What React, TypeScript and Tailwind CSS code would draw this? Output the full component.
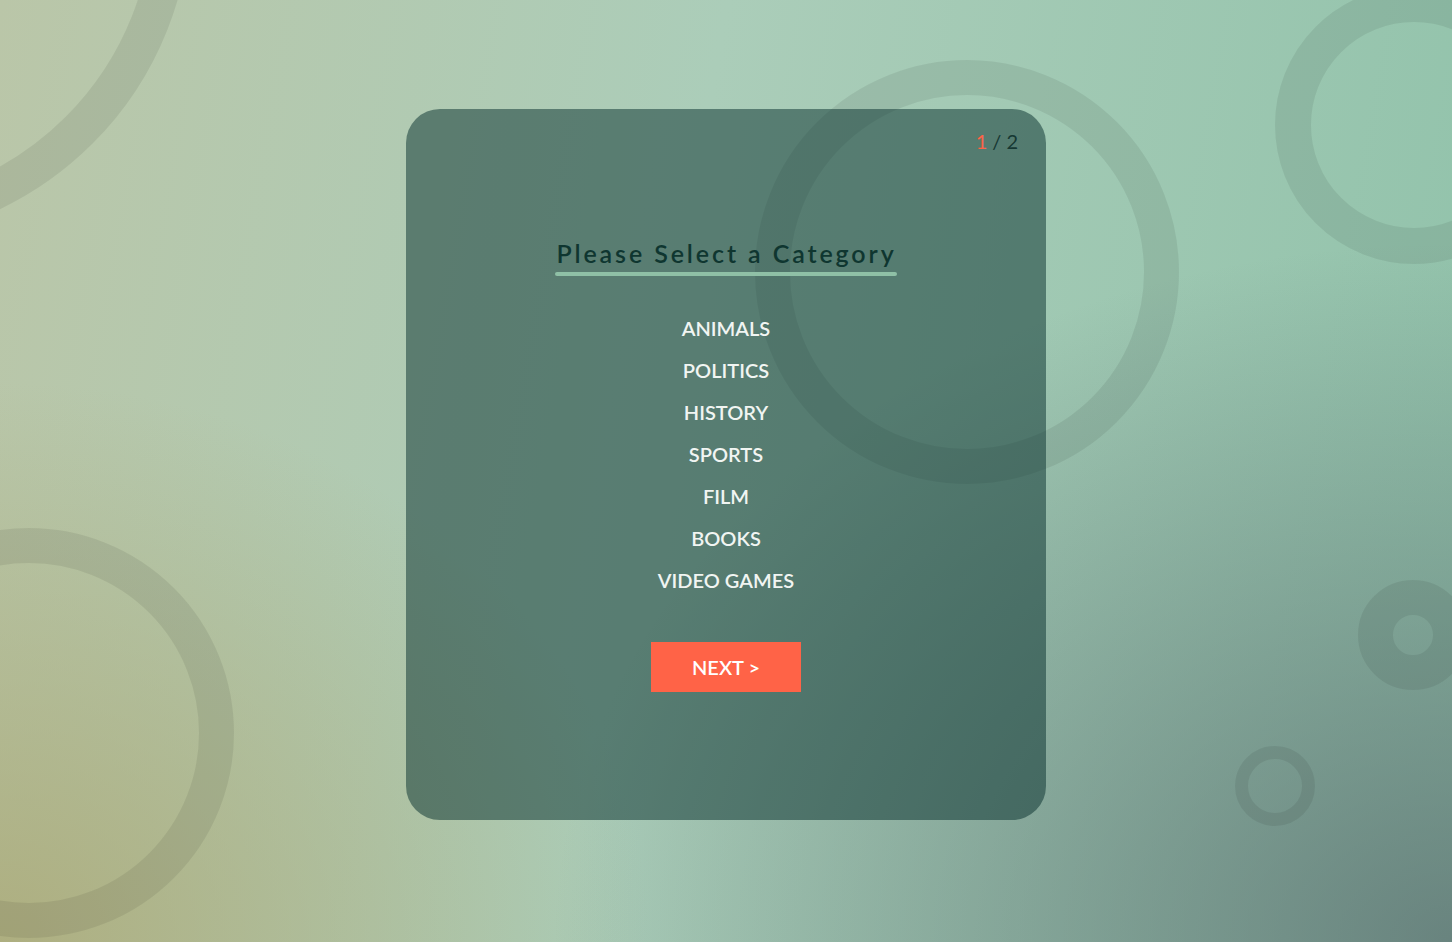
import React from 'react'

const categories = ['ANIMALS', 'POLITICS', 'HISTORY', 'SPORTS', 'FILM', 'BOOKS', 'VIDEO GAMES']

const font = { fontFamily: 'Lato, "Noto Sans", "Liberation Sans", sans-serif' }

function Rings() {
  return (
    <div className="pointer-events-none absolute inset-0 overflow-hidden">
      <div className="absolute left-[-481px] top-[-430px] h-[672px] w-[672px] rounded-full border-[38px] border-black/[0.075]" />
      <div className="absolute left-[755px] top-[60px] h-[424px] w-[424px] rounded-full border-[35px] border-black/[0.075]" />
      <div className="absolute left-[1275px] top-[-14px] h-[278px] w-[278px] rounded-full border-[36px] border-black/[0.075]" />
      <div className="absolute left-[1358px] top-[580px] h-[110px] w-[110px] rounded-full border-[35px] border-black/[0.075]" />
      <div className="absolute left-[1235px] top-[746px] h-[80px] w-[80px] rounded-full border-[13px] border-black/[0.075]" />
      <div className="absolute left-[-176px] top-[528px] h-[410px] w-[410px] rounded-full border-[35px] border-black/[0.075]" />
    </div>
  )
}

export default function App() {
  return (
    <div
      className="relative min-h-screen overflow-hidden bg-[radial-gradient(900px_700px_at_100%_100%,rgba(88,105,108,0.7)_0%,rgba(88,105,108,0)_100%),radial-gradient(650px_560px_at_0%_100%,rgba(172,170,120,0.85)_0%,rgba(172,170,120,0)_100%),linear-gradient(100deg,#bac6a8_0%,#abcdb9_45%,#90c2aa_100%)]"
      style={font}
    >
      <Rings />
      <div className="relative z-10 flex justify-center pt-[109px]">
        <div className="flex h-[711px] w-[640px] flex-col items-center rounded-[34px] bg-[#062d2b]/50">
          <div className="flex w-full justify-end pr-[28px] pt-[18px] text-[20px] leading-[28px] text-[#163833]">
            <span className="text-[#ff6347]">1</span>
            <span className="ml-[5px]">/ 2</span>
          </div>
          <div className="mt-[82px] inline-flex flex-col items-stretch">
            <h1 className="pl-[1px] text-[25px] font-semibold leading-[32px] tracking-[2.9px] text-[#0f3630]">
              Please Select a Category
            </h1>
            <div className="mt-[3px] h-[4px] rounded-full bg-[#8fc0a6]" />
          </div>
          <ul className="mt-[31px] flex flex-col items-center">
            {categories.map((c) => (
              <li key={c}>
                <button type="button" className="text-[20px] font-semibold leading-[42px] text-[#f1f5f2] hover:text-white">
                  {c}
                </button>
              </li>
            ))}
          </ul>
          <button
            type="button"
            className="mt-[41px] h-[50px] w-[150px] bg-[#ff6347] text-[20px] font-semibold text-white"
          >
            NEXT &gt;
          </button>
        </div>
      </div>
    </div>
  )
}
